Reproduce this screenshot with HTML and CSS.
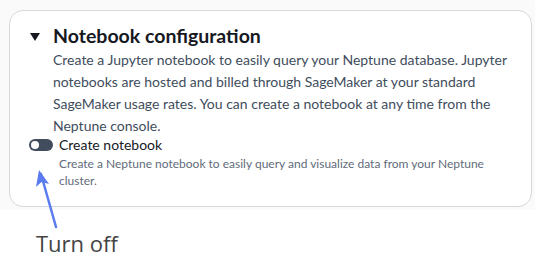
FILE: index.html
```html
<!DOCTYPE html>
<html lang="en">
<head>
  <meta charset="UTF-8" />
  <title>Notebook configuration</title>
  <link rel="stylesheet" href="styles.css">
</head>
<body>
<div class="console">
  <div class="panel">
    <div class="panel-header">
      <svg class="caret" width="10" height="8" viewBox="0 0 10 8"><path d="M0 0 H10 L5 8 Z" fill="#16191f"/></svg>
      <h2>Notebook configuration</h2>
    </div>
    <p class="panel-desc">Create a Jupyter notebook to easily query your Neptune database. Jupyter notebooks are hosted and billed through SageMaker at your standard SageMaker usage rates. You can create a notebook at any time from the Neptune console.</p>

    <div class="toggle-row">
      <span class="toggle"><span class="knob"></span></span>
      <div class="toggle-text">
        <div class="toggle-label">Create notebook</div>
        <div class="toggle-desc">Create a Neptune notebook to easily query and visualize data from your Neptune cluster.</div>
      </div>
    </div>
  </div>
</div>

<div class="annotation">
  <svg class="arrow" width="40" height="70" viewBox="0 0 40 70">
    <line x1="30" y1="61" x2="15" y2="8" stroke="#5b7cf0" stroke-width="2.5" stroke-linecap="round"/>
    <path d="M13 4 L10 21 L15.5 16 L23 18 Z" fill="#5b7cf0"/>
  </svg>
  <div class="note">Turn off</div>
</div>
</body>
</html>
```

FILE: styles.css
```css
body {
  margin: 0;
  background-color: #fff;
  font-family: Lato, "Open Sans", Arial, sans-serif;
}

.console {
  width: 535px;
  height: 210px;
  background-color: #fafafa;
  padding: 10px 0 0 9px;
  box-sizing: border-box;
}

.panel {
  width: 523px;
  height: 197px;
  box-sizing: border-box;
  background-color: #fff;
  border: 1px solid #d5d8dc;
  border-radius: 14px;
  padding: 12px 20px 0 20px;
}

.panel-header {
  display: flex;
  align-items: center;
  gap: 13px;
}

.caret {
  flex-shrink: 0;
  margin-top: 1px;
}

h2 {
  margin: 0;
  font-size: 19.5px;
  font-weight: 700;
  color: #16191f;
  line-height: 26px;
}

.panel-desc {
  margin: 0 0 0 23px;
  font-size: 14px;
  line-height: 22px;
  color: #414d5c;
}

.toggle-row {
  display: flex;
  gap: 6px;
  margin-top: -2px;
}

.toggle {
  width: 24px;
  height: 12px;
  border-radius: 6px;
  background-color: #414d5c;
  margin-top: 4px;
  margin-left: -1px;
  position: relative;
  flex-shrink: 0;
}

.knob {
  position: absolute;
  top: 2px;
  left: 2px;
  width: 8px;
  height: 8px;
  border-radius: 50%;
  background-color: #fff;
}

.toggle-label {
  font-size: 14px;
  line-height: 20px;
  color: #16191f;
}

.toggle-desc {
  font-size: 12px;
  line-height: 17px;
  color: #5f6b7a;
  max-width: 445px;
}

.annotation {
  position: relative;
  height: 49px;
}

.arrow {
  position: absolute;
  left: 26px;
  top: -44px;
}

.note {
  padding: 18px 0 0 36px;
  font-size: 22px;
  color: #444;
  font-family: "Open Sans", Arial, sans-serif;
}
```
